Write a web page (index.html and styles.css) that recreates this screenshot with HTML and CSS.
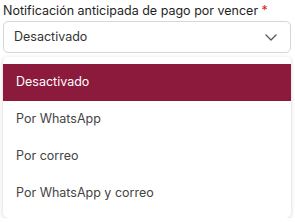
FILE: index.html
```
<!DOCTYPE html>
<html>
<head>
    <meta charset="utf-8">
    <title>Notificación</title>
    <link rel="stylesheet" href="styles.css">
</head>
<body>
    <div class="field">
        <label class="label">Notificación anticipada de pago por vencer <span class="req">*</span></label>
        <div class="select">
            <span>Desactivado</span>
            <svg class="chevron" width="14" height="14" viewBox="0 0 14 14">
                <path d="M2 5 L7 10 L12 5" fill="none" stroke="#555" stroke-width="1.3" stroke-linecap="round" stroke-linejoin="round"/>
            </svg>
        </div>
        <ul class="menu">
            <li class="option active">Desactivado</li>
            <li class="option">Por WhatsApp</li>
            <li class="option">Por correo</li>
            <li class="option">Por WhatsApp y correo</li>
        </ul>
    </div>
</body>
</html>
```

FILE: styles.css
```
body, html {
    margin: 0;
    background: #fff;
    font: 400 12.5px/1.3 "Inter", "Noto Sans", sans-serif;
    color: #222;
}

.field {
    padding: 3px 4px 0 3px;
}

.label {
    display: block;
    height: 17px;
    color: #1e1e1e;
}

.req {
    color: #e02020;
}

.select {
    box-sizing: border-box;
    height: 32px;
    margin-top: 1px;
    border: 1px solid #d6d6d6;
    border-radius: 5px;
    display: flex;
    align-items: center;
    justify-content: space-between;
    padding: 0 12px 0 10px;
    color: #333;
}

.chevron {
    display: block;
}

.menu {
    list-style: none;
    margin: 4px 0 0 0;
    padding: 7px 0 6px 0;
    background: #fff;
    border-radius: 5px;
    box-shadow: 0 1px 4px rgba(0, 0, 0, 0.18);
}

.option {
    height: 37px;
    display: flex;
    align-items: center;
    padding: 0 13px;
    color: #444;
}

.option.active {
    background: #8b1a3c;
    color: #fff;
}
```
